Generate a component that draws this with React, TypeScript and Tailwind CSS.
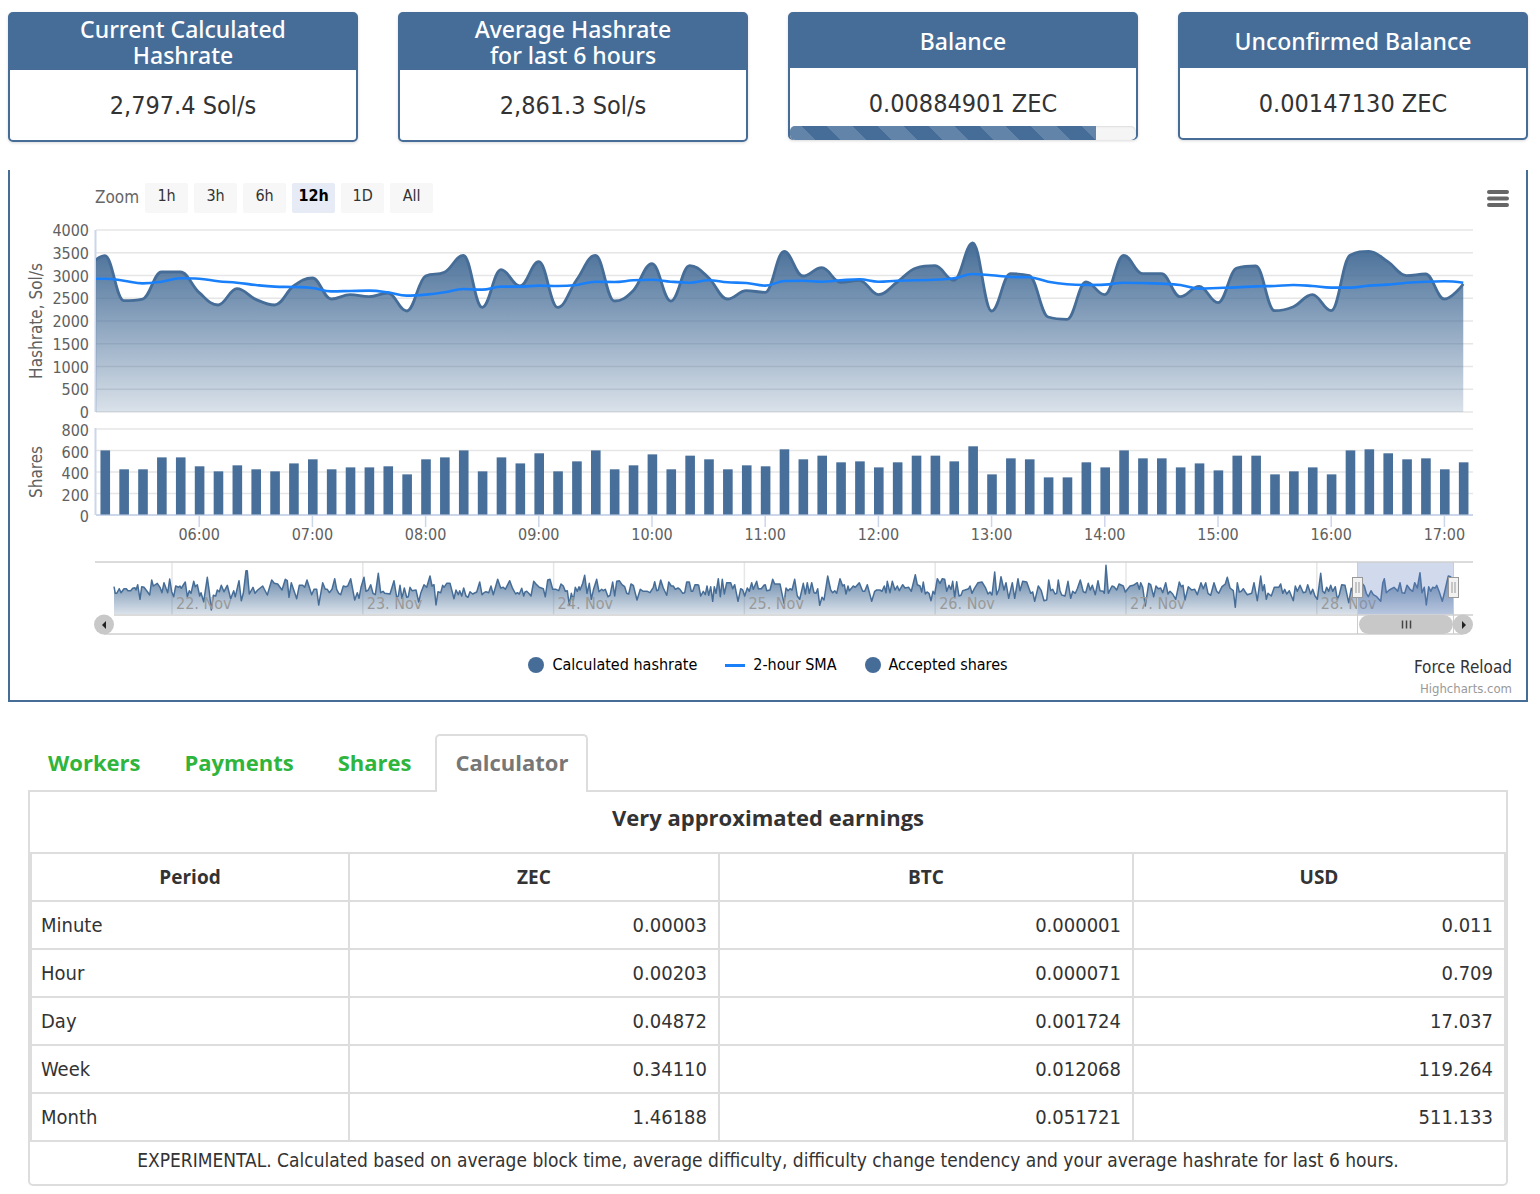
import { useState } from 'react';
import type { ReactNode } from 'react';

interface Card {
  title: string;
  value: string;
  progress?: number;
}

const cards: Card[] = [
  { title: 'Current Calculated\nHashrate', value: '2,797.4 Sol/s' },
  { title: 'Average Hashrate\nfor last 6 hours', value: '2,861.3 Sol/s' },
  { title: 'Balance', value: '0.00884901 ZEC', progress: 88.4 },
  { title: 'Unconfirmed Balance', value: '0.00147130 ZEC' },
];

const ranges = ['1h', '3h', '6h', '12h', '1D', 'All'];
const tabs = ['Workers', 'Payments', 'Shares', 'Calculator'];

const earnings = [
  ['Minute', '0.00003', '0.000001', '0.011'],
  ['Hour', '0.00203', '0.000071', '0.709'],
  ['Day', '0.04872', '0.001724', '17.037'],
  ['Week', '0.34110', '0.012068', '119.264'],
  ['Month', '1.46188', '0.051721', '511.133'],
];

// One sample every 10 minutes, 05:00 - 17:10
const hashrate = [
  3130, 3436, 2447, 2483, 3077, 3077, 2623, 2352, 2711, 2476, 2352, 2769, 2945, 2483, 2579, 2535, 2615, 2220,
  2989, 3070, 3443, 2300, 3128, 2769, 3304, 2300, 2901, 3443, 2440, 2667, 3260, 2440, 3216, 2952, 2483, 2667, 2630, 3531,
  2989, 3172, 2850, 2894, 2579, 2857, 3165, 3216, 2894, 3714, 2220, 3040, 2996, 2088, 2037, 2857, 2579, 3443, 3040, 3040, 2535,
  2762, 2403, 3165, 3209, 2227, 2315, 2579, 2227, 3443, 3531, 3304, 2996, 3033, 2483, 2813,
];

const sma = [
  2930, 2930, 2886, 2828, 2864, 2938, 2930, 2872, 2842, 2791, 2755, 2747, 2725, 2652, 2659, 2667, 2630, 2557,
  2579, 2630, 2703, 2689, 2755, 2755, 2777, 2769, 2791, 2864, 2857, 2894, 2908, 2864, 2842, 2894, 2850, 2835, 2777, 2879,
  2886, 2864, 2894, 2916, 2864, 2886, 2894, 2908, 2938, 3033, 3004, 2967, 2960, 2864, 2806, 2791, 2799, 2842, 2835, 2821, 2791,
  2711, 2725, 2740, 2762, 2769, 2791, 2769, 2733, 2733, 2777, 2799, 2842, 2864, 2872, 2842,
];

// Starts one sample later, at 05:10
const shares = [
  601, 425, 425, 536, 536, 453, 406, 462, 425, 406, 480, 518, 425, 443, 443, 453, 378,
  518, 536, 601, 406, 536, 480, 574, 406, 499, 601, 425, 462, 564, 425, 552, 518, 425, 462, 453, 611,
  518, 552, 490, 499, 443, 490, 552, 552, 499, 639, 378, 527, 518, 350, 350, 490, 443, 601, 527, 527, 443,
  480, 415, 552, 552, 378, 406, 443, 378, 601, 611, 574, 518, 527, 425, 490,
];

// Whole week for the navigator, "x,y" pairs in thirds of a pixel
const week = [
  {
    start: 70,
    points: `102,110 106,130 110,130 118,116 123,128 132,116 139,116 144,122 152,122 158,115 165,113 168,120 173,104 180,148
      185,110 192,112 200,122 209,135 215,90 220,108 232,100 240,112 246,128 252,98 258,115 263,128 269,87 275,125 281,140
      287,108 296,112 300,108 304,115 310,105 316,96 322,140 328,122 333,130 341,94 346,110 352,104 359,138 363,128 371,155
      382,82 388,125 394,180 400,136 407,138 412,120 418,125 424,106 432,125 442,106 452,146 461,122 466,140 477,92 484,152
      490,130 498,62 502,62 508,132 519,112 525,130 533,120 548,108 562,135 575,90 583,100 593,102 606,120 616,88 622,92
      627,142 634,98 650,146 658,106 668,106 674,112 681,90 688,112 695,134 702,118 710,118 716,165 728,98 736,118 742,118
      748,128 756,118 764,86 770,118 776,130 782,134 790,108 797,110 803,108 812,86 824,150 832,128 837,145 843,112 852,82
      858,124 865,120 872,104 879,130 886,134 895,70 902,128 909,124 914,130 930,132 942,92 950,142 955,138 960,106 966,145
      973,114 980,142 985,140 990,112 996,122 1008,120 1016,156 1022,130 1032,104 1040,112 1050,78 1056,108 1062,104
      1068,165 1074,125 1082,128 1088,106 1092,112 1100,100 1110,100 1122,146 1128,120 1135,134 1139,122 1145,138 1151,114
      1158,138 1164,142 1170,125 1178,132 1190,126 1199,96 1206,134 1212,128 1218,125 1226,128 1233,108 1240,134 1253,88
      1262,114 1270,112 1276,118 1289,92 1298,116 1307,132 1312,128 1318,132 1325,115 1331,138 1335,126 1340,124 1346,130
      1353,138 1361,94 1368,102 1378,112 1390,116 1396,140 1403,90 1410,88 1418,118 1428,118 1436,122 1443,102 1450,108
      1456,124 1462,122 1468,165 1474,130 1480,150 1486,112 1492,124`,
  },
  {
    start: 550,
    points: `57,110 60,120 68,100 74,76 81,130 88,100 94,148 101,116 110,88 117,125 125,118 130,122 136,118 144,140 150,136
      158,96 164,138 170,94 178,92 186,104 194,110 200,130 206,132 213,102 220,106 231,150 241,118 250,124 262,124 270,128
      280,112 284,95 290,122 295,120 302,90 310,114 320,136 326,96 334,108 340,108 346,118 354,114 360,118 368,130 374,128
      380,96 388,96 394,124 398,124 405,104 412,104 416,106 422,138 430,124 436,134 441,108 446,136 452,110 458,154 463,110
      468,130 475,86 481,140 487,88 493,132 500,98 512,98 518,116 524,104 534,154 542,116 548,120 554,138 562,114 568,124
      575,98 580,118 590,94 595,116 604,116 612,106 616,104 620,122 630,120 638,88 644,102 660,102 672,160 678,114 684,122
      690,116 696,120 704,88 712,138 719,148 730,100 736,132 742,98 748,130 755,98 762,128 768,130 773,116 779,166 786,142
      792,150 803,78 812,120 818,128 824,122 830,130 840,86 848,108 853,104 858,132 864,108 868,122 880,108 886,112 898,98
      908,124 914,124 922,104 935,154 944,124 950,120 960,120 966,124 973,108 978,128 982,94 990,128 997,94 1005,120
      1012,108 1018,122 1028,104 1035,114 1046,112 1054,124 1066,74 1072,104 1080,108 1085,126 1090,96 1096,132 1101,126
      1107,130 1113,152 1119,124 1124,132 1132,86 1140,100 1147,86 1154,88 1160,124 1167,106 1173,118 1178,94 1184,142
      1190,95 1197,138 1203,136 1208,122 1215,120 1226,116 1230,108 1236,130 1243,116 1254,98 1266,96 1276,112 1284,132
      1290,126 1296,135 1304,66 1310,134 1317,118 1323,80 1332,120 1338,98 1346,145 1357,98 1364,145 1374,86 1380,122
      1388,94 1400,96 1412,130 1418,126 1424,154 1435,108 1444,122 1452,152 1460,150 1466,90 1472,122 1478,118 1485,132
      1490,130`,
  },
  {
    start: 1030,
    points: `55,90 60,122 65,135 75,138 84,94 92,145 98,124 106,130 112,116 121,90 130,125 137,128 145,100 151,120 157,106
      166,134 174,92 180,122 190,124 193,130 198,46 205,130 216,108 222,110 230,120 237,102 250,108 256,126 270,108 280,106
      292,98 298,118 302,98 308,112 316,168 326,100 332,104 341,140 348,108 355,116 362,114 368,128 377,98 384,132 390,124
      398,132 407,148 418,96 424,110 429,106 435,150 445,110 455,120 464,118 472,134 483,98 490,116 497,98 504,130 512,136
      522,98 530,124 536,130 546,110 556,102 562,82 570,114 580,122 586,172 592,98 598,126 604,124 610,116 616,126 622,134
      635,130 642,98 652,152 662,78 668,122 673,104 679,148 684,130 694,138 703,112 716,112 722,102 728,130 734,118 740,132
      748,122 760,152 766,108 772,124 780,106 790,128 797,126 803,104 812,132 818,118 825,138 832,148 842,70 848,124
      854,130 860,112 866,124 872,106 878,124 886,110 892,148 898,134 905,104 915,106 926,158 934,115 942,130 950,125
      958,120 966,100 973,108 979,130 985,140 993,122 1000,134 1010,140 1022,154 1028,100 1033,86 1039,128 1048,120
      1062,112 1068,118 1073,124 1080,98 1086,128 1094,130 1101,106 1110,118 1118,124 1124,98 1132,114 1140,68 1146,128
      1153,112 1159,165 1166,110 1172,124 1178,112 1186,114 1190,106 1198,126 1207,154 1213,130 1220,98 1225,78 1232,80
      1240,100`,
  },
];

const LEFT = 86;
const RIGHT = 1463;
const STEP = 1132 / 60;
const NAV_TOP = 349;
const NAV_BOTTOM = 402;

const xAt = (i: number) => 76 + i * STEP;
const rateY = (v: number) => 199 - (v / 4000) * 182;
const sharesY = (v: number) => 302 - (v / 800) * 86;

type Point = [number, number];

// Smooth curve that never overshoots a local minimum or maximum
function spline(points: Point[]) {
  let d = `M${points[0][0]} ${points[0][1]}`;
  let [outX, outY] = points[0];
  for (let i = 1; i < points.length; i++) {
    const [x, y] = points[i];
    let inX = x;
    let inY = y;
    let nextOutX = x;
    let nextOutY = y;
    if (i < points.length - 1) {
      const [px, py] = points[i - 1];
      const [nx, ny] = points[i + 1];
      inX = (1.5 * x + px) / 2.5;
      inY = (1.5 * y + py) / 2.5;
      nextOutX = (1.5 * x + nx) / 2.5;
      nextOutY = (1.5 * y + ny) / 2.5;
      const shift = ((nextOutY - inY) * (nextOutX - x)) / (nextOutX - inX) + y - nextOutY;
      inY += shift;
      nextOutY += shift;
      if (inY > py && inY > y) {
        inY = Math.max(py, y);
        nextOutY = 2 * y - inY;
      } else if (inY < py && inY < y) {
        inY = Math.min(py, y);
        nextOutY = 2 * y - inY;
      }
      if (nextOutY > ny && nextOutY > y) {
        nextOutY = Math.max(ny, y);
        inY = 2 * y - nextOutY;
      } else if (nextOutY < ny && nextOutY < y) {
        nextOutY = Math.min(ny, y);
        inY = 2 * y - nextOutY;
      }
    }
    d += `C${outX} ${outY} ${inX} ${inY} ${x} ${y}`;
    outX = nextOutX;
    outY = nextOutY;
  }
  return d;
}

const ratePath = spline(hashrate.map((v, i) => [xAt(i), rateY(v)]));
const smaPath = spline(sma.map((v, i) => [xAt(i), rateY(v)]));

const navPath =
  'M' +
  week
    .flatMap(({ start, points }) =>
      points.split(/\s+/).map((p) => {
        const [x, y] = p.split(',').map(Number);
        return `${(start + x / 3).toFixed(1)} ${(337 + y / 3).toFixed(1)}`;
      })
    )
    .join('L');

const rateTicks = [4000, 3500, 3000, 2500, 2000, 1500, 1000, 500, 0];
const shareTicks = [800, 600, 400, 200, 0];
const hours = ['06:00', '07:00', '08:00', '09:00', '10:00', '11:00', '12:00', '13:00', '14:00', '15:00', '16:00', '17:00'];
const days = ['22. Nov', '23. Nov', '24. Nov', '25. Nov', '26. Nov', '27. Nov', '28. Nov'];

function Handle({ x }: { x: number }) {
  return (
    <g stroke="#999999">
      <rect x={x - 5} y={364.5} width={10} height={20} fill="#f2f2f2" />
      <path d={`M${x - 1.5} 369v11M${x + 1.5} 369v11`} />
    </g>
  );
}

function HashrateChart() {
  return (
    <svg viewBox="0 0 1516 424" className="block h-auto w-full" role="img" aria-label="Hashrate and shares">
      <defs>
        <linearGradient id="area" x1="0" y1="0" x2="0" y2="1">
          <stop offset="0" stopColor="#466d97" />
          <stop offset="1" stopColor="#466d97" stopOpacity="0.2" />
        </linearGradient>
        <clipPath id="plot">
          <rect x={LEFT} y="0" width={RIGHT - LEFT} height="310" />
        </clipPath>
      </defs>

      {/* Horizontal grid */}
      <g stroke="#e6e6e6" strokeWidth="1.5">
        {rateTicks.map((v) => (
          <path key={v} d={`M${LEFT} ${rateY(v)}H${RIGHT}`} />
        ))}
        {shareTicks.map((v) => (
          <path key={v} d={`M${LEFT} ${sharesY(v)}H${RIGHT}`} />
        ))}
      </g>
      <path
        d={`M85.5 17V199M85.5 215V302M${LEFT} 302H${RIGHT}`}
        stroke="#ccd6eb"
        strokeWidth="2"
        fill="none"
      />

      {/* Hashrate area and its moving average */}
      <g clipPath="url(#plot)" fill="none">
        <path d={`${ratePath}V199H${xAt(0)}Z`} fill="url(#area)" />
        <path d={ratePath} stroke="#466d97" strokeWidth="2.8" strokeLinejoin="round" />
        <path d={smaPath} stroke="#1a80fa" strokeWidth="2.6" strokeLinejoin="round" />
      </g>

      {/* Accepted shares */}
      <g fill="#486f99">
        {shares.map((v, i) => (
          <rect key={i} x={xAt(i + 1) - 4.4} y={sharesY(v)} width="9.6" height={301.5 - sharesY(v)} />
        ))}
      </g>

      <g className="fill-[#606060] font-['DejaVu_Sans_Condensed',sans-serif] text-[16px]">
        {rateTicks.map((v) => (
          <text key={v} x="79" y={rateY(v) + 6} textAnchor="end">{v}</text>
        ))}
        {shareTicks.map((v) => (
          <text key={v} x="79" y={sharesY(v) + 7} textAnchor="end">{v}</text>
        ))}
        {hours.map((h, i) => (
          <text key={h} x={xAt(6 + i * 6)} y="327" textAnchor="middle">{h}</text>
        ))}
        <text transform="translate(32 108) rotate(-90)" textAnchor="middle" className="text-[17px]">Hashrate, Sol/s</text>
        <text transform="translate(32 259) rotate(-90)" textAnchor="middle" className="text-[17px]">Shares</text>
      </g>
      <g stroke="#ccd6eb" strokeWidth="1.5">
        {hours.map((h, i) => (
          <path key={h} d={`M${xAt(6 + i * 6)} 302v12`} />
        ))}
      </g>

      {/* Navigator */}
      <g stroke="#e6e6e6" strokeWidth="1.5">
        {days.map((d, i) => (
          <path key={d} d={`M${162 + i * 190.8} ${NAV_TOP}V${NAV_BOTTOM}`} />
        ))}
      </g>
      <path d={`${navPath}V401H104Z`} fill="url(#area)" />
      <path d={navPath} fill="none" stroke="#466d97" strokeWidth="1.5" strokeLinejoin="round" />
      <g className="fill-[#999999] font-['DejaVu_Sans_Condensed',sans-serif] text-[16px]">
        {days.map((d, i) => (
          <text key={d} x={166 + i * 190.8} y="396">{d}</text>
        ))}
      </g>
      <rect x="1347" y={NAV_TOP} width="96" height="53" fill="#6685c2" fillOpacity="0.3" />
      <path d={`M85 ${NAV_TOP}H${RIGHT}M104 402H${RIGHT}M94 421H1453`} stroke="#d0d0d0" strokeWidth="1.5" />
      <path d={`M1347.5 ${NAV_TOP}V421M1443.5 ${NAV_TOP}V421`} stroke="#cccccc" />
      <Handle x={1347.5} />
      <Handle x={1443.5} />

      {/* Scrollbar */}
      <g fill="#c8c8c8">
        <rect x="1349" y="402" width="94" height="19" rx="9.5" />
        <circle cx="94" cy="411.5" r="10" />
        <circle cx="1453" cy="411.5" r="10" />
      </g>
      <path d="M96 408v8l-4-4zM1452 408v8l4-4z" fill="#222222" />
      <path d="M1392.5 407.5v8M1396.5 407.5v8M1400.5 407.5v8" stroke="#444444" strokeWidth="1.5" />
    </svg>
  );
}

function StatCard({ card }: { card: Card }) {
  return (
    <div className="relative rounded-[5px] border-2 border-[#466d97] bg-white text-center shadow-[0_1px_3px_rgba(0,0,0,0.15)]">
      <h2 className="flex min-h-[54px] items-center justify-center bg-[#466d97] py-0.5 font-['Noto_Sans',sans-serif] text-[23px] leading-[26px] font-medium whitespace-pre-line text-white">
        {card.title}
      </h2>
      <p className="pt-[18px] pb-4 text-[25px] leading-9">{card.value}</p>
      {card.progress && (
        <div
          role="progressbar"
          aria-label={card.title}
          aria-valuenow={card.progress}
          className="absolute inset-x-0 -bottom-0.5 h-3.5 overflow-hidden rounded-[5px] bg-[#f5f5f5] shadow-[inset_0_1px_2px_rgba(0,0,0,0.1)]"
        >
          <div
            className="h-full bg-[repeating-linear-gradient(45deg,#6384a9_0px,#6384a9_18px,#466d97_18px,#466d97_36px)]"
            style={{ width: `${card.progress}%` }}
          />
        </div>
      )}
    </div>
  );
}

function LegendItem({ mark, children }: { mark: 'dot' | 'line'; children: ReactNode }) {
  return (
    <button type="button" className="flex items-center gap-2">
      {mark === 'dot' ? (
        <span className="size-4 rounded-full bg-[#466d97]" />
      ) : (
        <span className="h-[3px] w-5 bg-[#1a80fa]" />
      )}
      {children}
    </button>
  );
}

export default function App() {
  const [range, setRange] = useState('12h');
  const [tab, setTab] = useState('Calculator');

  return (
    <main className="bg-white pt-3 pr-3 pb-2 pl-2 font-['DejaVu_Sans_Condensed',sans-serif] text-[#333333]">
      {/* Stats */}
      <section className="grid grid-cols-4 items-start gap-10">
        {cards.map((card) => (
          <StatCard key={card.value} card={card} />
        ))}
      </section>

      {/* Chart */}
      <section className="mt-7 border-2 border-t-0 border-[#466d97] pt-[13px]">
        <div className="flex items-center justify-between pr-4 pl-[85px]">
          <div className="flex items-center gap-1.5 text-base">
            <span className="text-[17px] text-[#666666]">Zoom</span>
            {ranges.map((r) => (
              <button
                key={r}
                type="button"
                onClick={() => setRange(r)}
                className={`h-[30px] w-[43px] rounded-xs pb-1 ${r === range ? 'bg-[#e6ebf5] font-bold text-black' : 'bg-[#f7f7f7]'}`}
              >
                {r}
              </button>
            ))}
          </div>
          <button type="button" aria-label="Chart menu">
            <svg viewBox="0 0 24 18" className="block h-[18px] w-6" stroke="#666666" strokeWidth="4" strokeLinecap="round">
              <path d="M3 3h18M3 9.5h18M3 16h18" />
            </svg>
          </button>
        </div>

        <HashrateChart />

        <div className="grid grid-cols-[1fr_auto_1fr] px-3.5 pt-4">
          <div className="col-start-2 flex h-6 items-center gap-7 text-base text-black">
            <LegendItem mark="dot">Calculated hashrate</LegendItem>
            <LegendItem mark="line">2-hour SMA</LegendItem>
            <LegendItem mark="dot">Accepted shares</LegendItem>
          </div>
          <div className="flex flex-col items-end pt-0.5 pb-px">
            <button type="button" className="text-[17px] leading-6">Force Reload</button>
            <a href="#" className="text-[13px] leading-5 text-[#999999]">Highcharts.com</a>
          </div>
        </div>
      </section>

      {/* Tabs */}
      <section className="mt-8 mr-5 ml-5">
        <div role="tablist" className="relative -mb-0.5 flex gap-1">
          {tabs.map((t) => (
            <button
              key={t}
              type="button"
              role="tab"
              aria-selected={t === tab}
              onClick={() => setTab(t)}
              className={`h-[58px] rounded-t-[5px] border-2 border-b-0 px-[18px] pb-1 font-['Open_Sans',sans-serif] text-[22px] font-bold ${
                t === tab ? 'border-[#dddddd] bg-white text-[#777777]' : 'border-transparent text-[#2fb43c]'
              }`}
            >
              {t}
            </button>
          ))}
        </div>
        <div role="tabpanel" className="rounded-b-[5px] border-2 border-[#dddddd]">
          <h3 className="h-[60px] pt-[7px] text-center font-['Open_Sans',sans-serif] text-[22px] leading-9 font-bold">
            Very approximated earnings
          </h3>
          <table className="w-full table-fixed border-collapse">
            <colgroup>
              <col className="w-[318px]" />
              <col className="w-[370px]" />
              <col className="w-[414px]" />
              <col />
            </colgroup>
            <thead>
              <tr className="h-12 font-['Open_Sans',sans-serif] text-[19px]">
                {['Period', 'ZEC', 'BTC', 'USD'].map((h) => (
                  <th key={h} className="border-2 border-[#dddddd]">{h}</th>
                ))}
              </tr>
            </thead>
            <tbody className="text-xl">
              {earnings.map(([period, ...amounts]) => (
                <tr key={period} className="h-12">
                  <td className="border-2 border-[#dddddd] px-[9px]">{period}</td>
                  {amounts.map((amount) => (
                    <td key={amount} className="border-2 border-[#dddddd] px-[11px] text-right">{amount}</td>
                  ))}
                </tr>
              ))}
            </tbody>
          </table>
          <p className="pb-1.5 text-center text-[19px] leading-9">
            EXPERIMENTAL. Calculated based on average block time, average difficulty, difficulty change tendency and your
            average hashrate for last 6 hours.
          </p>
        </div>
      </section>
    </main>
  );
}
